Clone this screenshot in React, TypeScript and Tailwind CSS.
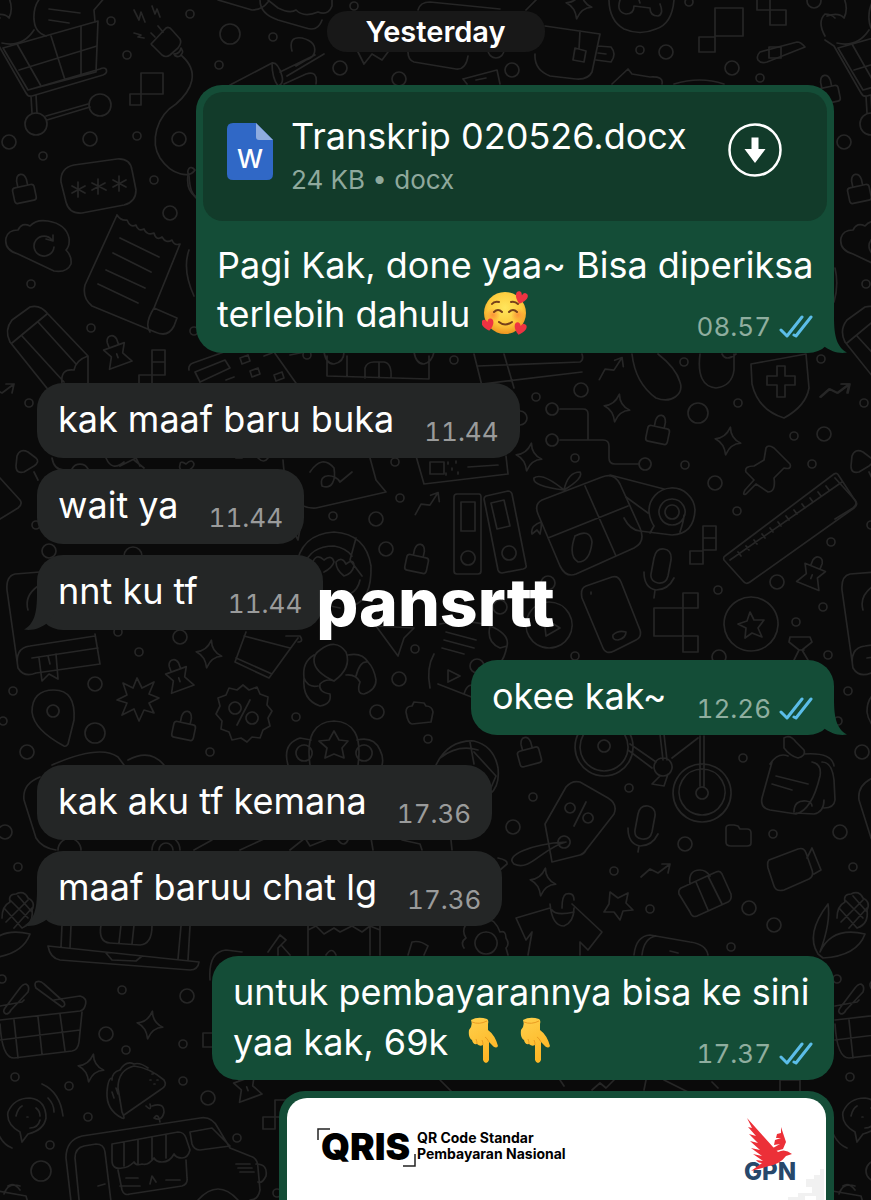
import type { ReactNode } from "react";

interface MessageType {
	lines: ReactNode[];
	time: string;
	sent?: boolean;
	tail?: boolean;
	width?: string;
	document?: boolean;
}

const dots = [
	[111, 21, 4], [190, 14, 4], [230, 34, 10], [273, 37, 4], [127, 55, 4], [219, 65, 4], [340, 68, 7],
	[399, 79, 7], [90, 139, 7], [9, 142, 7], [137, 136, 4], [179, 139, 7], [43, 156, 4], [154, 180, 4],
	[170, 213, 7], [31, 284, 4], [91, 328, 4], [194, 331, 4], [36, 124, 11], [100, 105, 11], [354, 6, 4],
	[512, 70, 7], [640, 50, 4], [666, 52, 7], [732, 68, 7], [760, 78, 4], [689, 2, 4], [814, 1, 7],
	[496, 50, 8], [454, 360, 4], [684, 362, 4], [821, 359, 4], [307, 355, 4], [29, 403, 4], [395, 462, 4],
	[400, 498, 4], [333, 516, 4], [376, 519, 7], [386, 549, 7], [49, 551, 7], [36, 525, 4], [133, 556, 9],
	[180, 637, 7], [139, 652, 4], [118, 632, 4], [95, 684, 7], [13, 691, 4], [3, 721, 4], [296, 717, 4],
	[27, 752, 7], [95, 733, 10], [377, 712, 7], [428, 739, 4], [399, 679, 7], [415, 649, 4], [210, 752, 4],
	[536, 397, 4], [581, 390, 7], [520, 418, 7], [698, 413, 10], [738, 403, 4], [575, 458, 4],
	[685, 465, 4], [715, 483, 7], [794, 436, 4], [824, 434, 7], [812, 464, 4], [737, 511, 4],
	[831, 542, 4], [777, 582, 7], [718, 590, 4], [823, 607, 4], [796, 622, 4], [828, 655, 4],
	[575, 656, 4], [719, 657, 7], [477, 666, 7], [743, 758, 4], [548, 583, 7], [500, 607, 7], [5, 832, 7],
	[18, 867, 4], [2, 979, 4], [122, 990, 4], [187, 996, 7], [106, 1034, 7], [126, 1050, 4],
	[183, 1044, 4], [183, 1081, 4], [15, 1077, 4], [69, 1086, 4], [208, 1098, 7], [88, 1117, 4],
	[50, 1145, 4], [41, 1171, 10], [237, 1138, 4], [533, 797, 4], [513, 827, 7], [629, 788, 4],
	[685, 844, 7], [773, 834, 4], [614, 871, 4], [650, 909, 4], [749, 908, 7], [774, 925, 7],
	[731, 947, 4], [277, 1193, 4],
];

const sparkles = [
	[209, 654], [617, 408], [728, 441], [529, 457], [150, 1025], [91, 1068], [543, 882], [579, 5],
];

const locks = [
	[24, 192, -12], [417, 562, 12], [184, 729, 12], [658, 433, 12], [529, 755, -15], [828, 93, -12],
];

const tacks = [
	[116, 352, -20], [178, 676, -20], [813, 573, 22], [246, 1085, -20],
];

const trends = [
	[836, 390, 0], [427, 503, -20], [656, 870, 0], [0, 390, 0], [611, 368, -20],
];

const drawings = [
	// shopping cart and the things lying in it
	"M3 48 98 21 96 72 28 90Z M19 70 97 46 M17 44 41 86 M51 36 65 80 M81 26V76 M-10 40 -1 46 26 93Q28 97 32 96L103 75Q108 73 106 69Q104 67 100 69L28 90 M31 96 32 113 M36 95 37 113 M47 120 90 107 M46 116 88 104",
	"M34 20Q33 5 42 -4 M34 18Q34 32 46 36 M49 9 80 13 M49 20 69 23 M95 22 94 10 106 -4 M34 30Q22 48 2 43 M-8 16Q4 12 9 18Q14 8 8 -4",
	"M-10 36Q-18 22 -10 14Q-4 14 0 18 M-75 52Q-79 56 -77 60Q-74 64 -68 62L-30 47Q-34 42 -38 42Z",
	// plug with a long cable
	"M152 43 166 28Q169 26 172 30L180 39Q182 43 178 48L170 55Q166 58 162 55L153 46Q150 44 152 43 M174 54Q180 54 181 48L182 50Q184 52 180 56Q176 58 174 54 M158 26 163 32 M151 33 155 37 M182 56C200 72 192 90 176 104C156 116 150 142 160 158C172 176 190 178 195 170C190 164 186 170 189 176C190 190 192 194 197 199",
	"M134 10 139 20 141 12 145 22 M152 6 155 14 157 9 160 17 M134 33 141 35 138 37 144 38",
	// pixel squares
	"M141 73h22v21h-22z M130 94h11v11h-11z M152 350h13v25h-13z M152 362h13 M139 375h13v13h-13z M715 8h28v28h-28z M699 37h16v15h-16z M770 10h16v15h-16z M757 -4h13v14h-13z M769 47h12v11h-12z M703 526h13v24h-13z M703 538h13 M690 551h13v13h-13z M654 608h29v28h-29z M683 593h15v15h-15z M683 636h15v16h-15z M203 1033h12v14h-12z M263 1117h12v12h-12z M275 1100h12v17h-12z M780 1080h20v12h-20z",
	// password field
	"M74 165 117 159Q130 158 132 170L136 190Q136 202 124 205L82 213Q69 214 66 202L61 182Q60 168 74 165Z M78 182v15 M72 186 85 193 M72 193 85 186 M98 179v15 M92 183 106 190 M92 190 105 183 M119 176v15 M113 180 126 187 M113 187 126 180",
	// cloud
	"M18 254Q4 250 6 238Q8 230 18 230Q22 222 30 226Q36 219 48 221Q66 224 69 238Q70 246 66 250Q72 256 71 264Q67 273 54 271Z M52 240A10 10 0 1 0 54 247 M46 239 53 241 53 235",
	// receipt
	"M117 215 85 285Q82 298 92 306L155 332Q168 338 174 326L177 318 154 308Q144 324 150 332 M154 308 180 244Q174 246 172 240Q166 244 162 237Q156 241 154 233Q147 236 144 229Q138 232 136 225Q130 228 127 220Q121 221 117 215 M120 238 159 257 M113 253 151 272 M106 270 145 288 M98 284 138 303",
	// pencil
	"M10 342Q4 330 12 320L30 307Q40 304 48 314L88 356V385 M10 342 50 392 M12 343 47 314 M22 336 64 382 M38 322 76 364 M62 384Q60 368 74 370Q76 360 88 356",
	// calculator
	"M189 370Q188 365 193 363L224 352H274L298 386 M195 372 225 360 230 368 200 382Z M240 358 248 355 250 361 242 364Z M264 356 272 353M250 371 258 368 260 374 252 377Z M274 375 282 372 284 378 276 381Z M226 380l8-3",
	// shelf
	"M327 356V376L429 379V356 M347 356V376 M365 378V368Q367 362 374 362H384Q392 363 391 378 M379 362V378 M324 352Q326 364 334 364Q344 362 344 352 M414 352Q416 364 424 364Q432 362 434 352",
	// megaphone, hanger, food and mug on top
	"M230 85 272 63 M272 63Q278 62 282 76Q284 84 278 86Q272 78 272 63 M280 72 315 55 M287 76 324 54 M292 51Q288 36 302 38Q318 42 314 54Q312 58 306 60L296 66 M284 84 306 74Q318 70 316 84",
	"M218 0 252 10Q262 10 268 2 M260 0Q260 14 278 20L306 28Q318 32 322 20 M268 0 278 8 Q290 14 296 10Q304 18 318 12Q328 16 332 6V0 M358 52 364 64 372 54 382 60 388 52 M408 52Q408 60 414 62L456 69Q466 70 468 56",
	"M418 10Q420 2 430 2L500 9 M526 10 538 -2 M545 26 600 34 592 72Q588 80 576 79L550 76Q534 70 535 54 M580 31 579 49 M575 48 586 51 584 62 573 60Z M598 46 611 47Q617 54 611 62L596 60 M598 53 606 54 M463 79 497 70 500 84 M463 79 467 84 M476 80 486 78 M612 84 628 69 632 74 650 77 Q664 76 662 84 M674 84Q700 76 724 84",
	"M609 -4Q608 20 624 29Q640 36 656 29Q672 24 674 0 M620 0Q616 12 626 14Q634 14 634 6L650 8Q650 16 658 16Q664 14 660 4 M639 0 640 3",
	"M189 250Q182 270 194 296 M188 175Q186 190 195 196 M835 268Q839 285 834 302 M290 355 305 352",
	// boxes and bottles between the bubbles
	"M474 354 482 386 M504 354 514 388 M482 384 582 372 M478 366 580 362Q584 360 582 354 M632 354C634 372 642 388 656 398C672 404 684 394 680 382Q676 368 658 354 M700 354Q696 386 716 388Q732 386 734 370V354 M722 354Q726 362 736 354 M751 364 806 354 809 388Q806 406 784 418Q758 410 752 384Z M777 366h8v10h10v9h-10v12h-8v-12h-10v-9h10z",
	// circuit
	"M560 409H583Q588 409 588 414V439 M560 440H603Q609 440 609 446V458Q609 464 615 464H638 M552 403a6 6 0 1 0 .1 0 M552 434a6 6 0 1 0 .1 0 M645 458a6 6 0 1 0 .1 0",
	// signature note and radio
	"M283 460Q286 510 316 508L386 492 376 480 370 458 M310 472Q322 454 334 468C336 480 332 490 322 486C318 472 336 474 340 482L352 472 M416 456 424 484 508 474 506 456 M430 462h14v12h-14z M468 467 498 465 M448 462v2 M456 461v2 M452 468v2 M446 473v2 M458 472v2",
	"M52 458Q54 470 64 470 M72 469A9 9 0 0 1 88 469 M106 458Q112 472 124 462 M120 466 136 458 140 466 M134 460 144 468 M180 465Q180 460 186 464Q192 458 194 464Q194 468 186 472Q178 470 180 465 M236 458h6 M258 458q6 6 10 0",
	// play buttons
	"M17 456Q20 448 28 452L36 458Q40 462 34 466L24 472Q16 474 16 466Z M0 478 20 500Q23 504 18 508L0 519 M34 472 38 480",
	// binders and gift
	"M457 494H479Q481 494 481 497V571Q481 574 478 574H457Q454 574 454 571V497Q454 494 457 494Z M461 502h14v29h-14z M468 551a7 7 0 1 0 .1 0 M486 496 508 491Q511 491 512 494L526 565Q527 568 523 569L502 573Q499 573 498 570L484 499Q484 497 486 496Z M491 503 504 500 510 526 497 529Z M509 546a7 7 0 1 0 .1 0",
	"M542 500 602 477Q614 472 620 484L640 528Q646 542 634 548L576 574Q566 578 560 566L538 514Q534 504 542 500Z M585 486 616 556 M548 538 628 506 M564 490Q532 486 534 478Q542 472 564 490Q568 472 580 472Q584 478 564 490 M575 536Q590 528 592 542Q590 562 578 562Q568 556 575 536 M541 522Q530 526 532 534L537 530 540 534Q542 526 541 522",
	// tape
	"M610 475 664 489 M626 497 648 513 M624 518Q630 530 640 531L672 535Q694 534 695 510A23 23 0 1 0 649 512Q650 520 654 526L650 533 M672 499a13 13 0 1 0 .1 0 M672 505a7 7 0 1 0 .1 0 M680 532Q684 520 684 515",
	// microphones
	"M654 558Q656 548 664 549Q672 550 671 560L668 576Q666 584 658 583Q650 581 651 574Z M644 572Q644 588 656 590Q668 590 674 578 M655 590 654 598 M638 814Q640 805 648 806Q656 808 655 816L652 832Q650 840 642 839Q634 838 635 830Z M628 828Q628 844 640 846Q652 846 658 834 M639 846 638 852",
	// pushpin
	"M766 448Q768 444 774 448L790 464Q792 470 784 468L774 478Q776 492 768 492L756 484 746 494Q742 496 745 490L754 480 746 472Q744 466 754 466L764 460Z",
	// ruler
	"M725 556 834 474Q837 472 839 476L856 502Q858 505 854 508L750 582Q746 585 743 581L724 560Q723 557 725 556Z M730 560 842 482 M738 552 741 556 M746 546 749 550 M754 540 757 544 M762 534 765 538 M770 528 773 532 M778 522 781 526 M786 516 789 520 M794 510 797 514 M802 504 805 508 M810 498 813 502 M818 492 821 496 M826 486 829 490",
	// phone, stars and blocks
	"M586 586 612 577Q618 575 621 582L640 630Q642 637 636 640L614 651Q606 655 603 648L582 598Q580 588 586 586Z M591 592v2 M613 635Q618 630 626 632Q626 638 618 640Q612 640 613 635 M751 597a27 27 0 1 0 .1 0 M750 612 754 620 764 620 758 628 762 637 752 633 745 638 746 628 738 624 747 621Z M549 602a23 23 0 1 0 .1 0 M544 618 560 628 546 636Z",
	"M790 637H810L812 642 802 650 808 660 M790 637 789 642 799 650 794 660 M799 650h5",
	"M440 624Q464 618 490 626 M446 632 476 640 M444 640 474 648 M442 648 464 654 M438 684 474 698 M490 626Q486 642 500 648L507 646Q504 660 500 662 M490 626Q510 634 507 646 M448 670 460 676 448 682Z M464 694Q468 680 478 688",
	// smiling lollipop
	"M296 568Q300 534 334 532Q366 534 371 566Q372 600 352 606 M304 566Q310 546 334 546Q346 548 352 556 M312 564Q316 552 324 560Q332 554 334 562Q332 568 324 572 M336 562Q342 556 346 564Q354 558 354 566Q352 574 344 576Q336 570 336 562 M356 538 350 560 362 576 M360 580Q358 590 350 594 M294 532 302 518 298 540Z",
	// book
	"M40 572 15 574Q6 576 7 590L18 668Q24 678 36 673L100 664 95 634 M18 668Q14 648 30 646L95 636 M32 658 98 648 M39 658 42 681 49 674 58 679 56 654 M48 656 50 664 M38 586Q24 596 28 610",
	// map pin
	"M64 746Q66 747 68 744L74 720Q76 690 54 690Q32 690 32 712Q34 730 64 746Z M53 705a6 6 0 1 0 .1 0",
	// burst
	"M137 678 142 688 154 682 149 694 159 698 149 703 154 713 144 710 139 721 134 709 122 715 127 703 117 700 127 695 123 683 133 688Z",
	// percent badge
	"M243 685 249 690 257 687 260 694 268 697 267 705 272 711 268 718 270 726 263 730 260 738 252 737 247 742 241 738 232 740 229 732 221 729 222 721 216 714 220 706 218 698 226 695 229 688 237 690Z M235 702a6 6 0 1 0 .1 0 M252 712a6 6 0 1 0 .1 0 M250 700 237 725",
	// coffee cup
	"M246 632 235 662 269 678 298 638 M236 658 272 674 M244 636 290 648 M286 636 300 636Q304 642 298 642 M302 600 340 608",
	// croissant
	"M320 650Q336 638 346 652Q352 668 334 681Q314 672 314 660Q314 654 320 650Z M314 655Q302 662 304 678 M304 678Q302 700 320 706Q332 704 330 694Q318 692 320 684Q326 678 334 681 M304 678Q308 688 318 686 M348 655Q362 652 368 662Q360 660 356 676 M346 675Q356 674 360 682Q356 694 364 694Q376 690 376 680Q374 668 368 662",
	// paper plane and small folder
	"M376 626 398 656 404 638 414 628Z M430 688Q426 668 434 654",
	"M406 712Q406 706 412 706L414 702 424 703 426 706Q432 706 433 712L431 722 412 724Q408 724 406 712",
	// star flower
	"M310 765Q304 722 334 721Q364 722 358 765 M288 765Q282 744 300 738L311 740 M357 740Q374 736 380 750Q384 758 382 765 M304 745a8 8 0 1 0 .1 0 M364 745a8 8 0 1 0 .1 0 M334 731 339 740 348 741 342 748 344 758 334 754 325 758 327 748 319 741 329 740Z",
	// suitcase behind the received bubbles
	"M52 765Q100 744 118 757L124 765 M128 760Q150 748 164 765 M40 777Q22 784 24 800L36 838Q42 848 56 850 M58 850A11 11 0 0 1 81 850 M152 850A13 13 0 0 1 180 850 M159 850A7 7 0 0 1 173 850 M194 850 212 840 M240 850 266 838 M290 850 305 838 310 846 330 838 M338 840q6 8 10 0 M371 838 373 850 M402 840 420 844 422 850",
	// beach ball
	"M436 765Q448 740 474 741Q494 746 498 768Q500 786 490 794 M440 758Q458 744 478 750 M470 742 474 764 M474 752 496 776 490 790 M451 840 452 850",
	// bicycle
	"M604 718a29 29 0 1 0 .1 0 M604 723a24 24 0 1 0 .1 0 M604 740a6 6 0 1 0 .1 0 M702 764a29 29 0 1 0 .1 0 M702 769a23 23 0 1 0 .1 0 M702 787a6 6 0 1 0 .1 0 M630 744 656 762 M628 750 652 768 M660 734 663 760 M664 734 667 760 M672 758 698 738 M700 736V786 M704 736V786 M663 758a9 9 0 1 0 .1 0 M660 776 652 784 664 786 668 774",
	// price tag
	"M545 824 566 787Q572 780 580 782L608 798Q618 804 614 814L586 850Q584 854 580 855L552 862Z M570 803a5 5 0 1 0 .1 0 M588 813a5 5 0 1 0 .1 0 M586 802 574 826 M564 836a6 6 0 1 0 .1 0 M566 842C530 844 504 856 514 864C530 872 542 848 566 842 M498 858Q508 860 507 864L500 870",
	// sticky notes
	"M772 762 762 798Q760 808 770 810L796 814Q812 810 820 776Q822 764 812 762 M776 776 808 784 M772 784 792 790 M794 812Q794 800 806 801Q812 802 812 806 M796 813 814 814Q824 812 824 800 M822 762Q832 762 834 780L835 800Q834 808 824 808 M784 738Q790 734 796 742L804 750Q806 756 798 758Q790 756 784 748Z M770 764Q778 752 788 756 M804 754Q832 752 834 766",
	// folder, camera and bag
	"M726 828Q726 825 730 825H734L738 826 740 829H747Q751 829 751 833V843Q751 846 747 846H731Q726 846 726 842Z M769 860 798 849Q804 847 806 853L812 870Q814 876 809 879L784 890Q776 892 774 886L768 868Q767 862 769 860Z M807 858 812 848 821 870 814 874",
	"M681 888 716 872Q720 870 722 874L731 894Q732 900 728 902L697 916Q692 918 690 912L679 894Q678 890 681 888Z M690 884Q688 870 700 870Q706 870 710 876 M696 882 708 910 M708 876 722 904",
	"M610 892 618 898 628 893 626 903 633 910 623 911 620 920 614 912 604 912 609 904Z",
	// t-shirt and gear
	"M550 908 516 918 526 940 532 932 528 955 M572 904 602 932 588 950 580 942V955 M550 904Q552 926 564 926Q574 922 574 908 M552 910Q556 916 574 912 M562 908Q562 896 566 894Q574 892 574 900",
	"M465 926 470 922Q490 918 494 922Q498 926 500 932Q506 930 506 938Q510 944 506 948L508 955 M465 926Q462 932 466 938Q460 942 464 948 M486 932a11 11 0 1 0 .1 0 M634 955Q636 936 650 935L690 942Q706 944 708 955 M642 955Q644 938 656 936 M670 951 678 953",
	// corn
	"M-17 954Q-30 934 -7 904Q-4 922 -15 952Q-3 926 30 934Q22 956 -12 958Z M2 918Q2 906 10 902Q8 894 16 894Q24 890 28 898Q36 902 32 910Q34 924 22 928 M4 908 22 928 M10 900 28 918 M18 896 32 912 M6 922 28 900 M14 928 32 908",
	// laptop
	"M62 925 61 947 M71 925 70 948 M48 946 199 962Q198 970 190 970L60 960Q50 958 48 946Z M106 953 112 960 136 961 142 956 M181 926 178 959 M190 926 188 960 M101 925Q98 942 110 943L140 945Q152 944 152 926 M121 925 119 943 M134 925 132 944",
	// torn papers
	"M308 925V955 M308 930 316 926 324 934 334 928 340 932 352 926 362 932 370 926 380 930 M370 926V955 M380 926V955 M210 980Q208 952 226 950L242 952 M268 952 280 935 286 940 278 948 278 955 M282 946 290 955 M326 955Q332 946 336 955 M408 955 412 942Q420 940 428 946L424 955",
	// shopping basket
	"M0 1006 22 1002 24 1000 M54 1000 80 996Q88 998 85 1006Q84 1010 80 1011L0 1020 M0 1024Q2 1058 14 1058L72 1051Q78 1050 79 1042L82 1012 M14 1020 18 1058 M38 1017 42 1054 M60 1014 65 1051 M0 1040 80 1030 M5 1008Q2 1012 6 1014Q9 1014 11 1010L28 992Q30 986 26 984Q23 984 20 988Z M36 982Q40 980 44 984L64 1002Q66 1006 62 1007L36 988Q34 984 36 982Z",
	// taco
	"M118 1088Q118 1070 134 1066Q150 1068 164 1080Q168 1086 160 1090L124 1115 M122 1118Q106 1110 107 1092Q108 1078 112 1078 M112 1080Q112 1072 120 1070Q126 1060 134 1064Q140 1062 148 1068 M118 1088 122 1112Q126 1120 122 1118 M112 1092l2 6 M116 1088l2 6 M150 1080h1 M154 1084h1 M157 1080h1 M152 1074h1 M146 1106Q152 1112 150 1104 M152 1106Q164 1102 164 1112Q162 1122 154 1118Q158 1112 160 1122",
	// speaking bubble
	"M20 1132Q6 1124 8 1112Q14 1098 30 1098Q46 1100 46 1118Q44 1130 28 1134L22 1142Z M16 1116Q18 1108 22 1106 M40 1120Q38 1128 30 1128 M27 1117h1 M36 1108q4 3 4 8 M42 1084Q60 1092 63 1116 M48 1098Q54 1104 54 1112 M-8 1110Q-4 1142 12 1148",
	// food truck
	"M72 1210 66 1158Q66 1140 82 1136L200 1118Q212 1116 218 1128L230 1148 250 1156Q258 1158 258 1168L260 1190Q258 1200 250 1200 M80 1210 75 1158Q75 1148 84 1146L96 1144Q104 1144 105 1152L112 1210 M98 1186 105 1184 M112 1144 178 1132Q184 1132 186 1138L190 1150Q188 1158 182 1158Q176 1158 174 1154Q170 1162 162 1162Q156 1162 154 1158Q148 1166 142 1164Q136 1166 134 1162Q128 1168 122 1168Q112 1170 112 1160Z M124 1143V1166 M138 1140V1164 M152 1138V1160 M166 1135V1158 M118 1170 122 1190Q124 1196 130 1194L182 1186Q188 1184 187 1178L186 1160 M190 1132 212 1128 230 1146 200 1150Q194 1150 192 1144Z M236 1164h14 M238 1168h14 M240 1172h14 M198 1200Q218 1178 238 1200 M256 1164Q268 1164 266 1176Q262 1184 258 1182 M120 1186h20 M126 1178h12 M166 1180h14 M150 1184 152 1176 156 1182",
	// handbag
	"M4 1194Q8 1182 20 1186 M-20 1188 26 1196 30 1210 M8 1186Q14 1182 20 1190",
	"M440 1080 452 1092 M592 1090 600 1083 606 1088 614 1080 M646 1080 644 1090 M664 1080 688 1092 M712 1082 718 1088 M560 1080 564 1086",
];

const Doodles = () => {
	return (
		<svg
			className="absolute top-0 left-0"
			width="1670"
			height="1200"
			fill="none"
			stroke="#262626"
			strokeWidth="1.7"
			strokeLinejoin="round"
			strokeLinecap="round"
			aria-hidden="true"
		>
			<defs>
				<path id="sparkle" d="M0-14Q2-3 13 0Q3 2 0 14Q-3 3-13 0Q-3-2 0-14Z" />
				<path id="lock" d="M-8-6H8Q11-6 11-3V7Q11 10 8 10H-8Q-11 10-11 7V-3Q-11-6-8-6Z M-5-6V-12Q-4-18 0-18Q4-18 5-12V-6" />
				<path id="tack" d="M-11-6H11L6 3 12 14H-12L-6 3Z M-5-6V-12Q-4-17 0-17Q4-17 5-12V-6 M0 2V6" />
				<path id="trend" d="M-15 7-6-1 2 3 14-6 M6-6H14L12 3" />
			</defs>
			<g id="wallpaper">
				{drawings.map((d, index) => (
					<path d={d} key={index} />
				))}
				{dots.map(([x, y, r], index) => (
					<circle cx={x} cy={y} r={r} key={index} />
				))}
				{sparkles.map(([x, y], index) => (
					<use href="#sparkle" transform={`translate(${x} ${y}) rotate(10)`} key={index} />
				))}
				{locks.map(([x, y, angle], index) => (
					<use href="#lock" transform={`translate(${x} ${y}) rotate(${angle})`} key={index} />
				))}
				{tacks.map(([x, y, angle], index) => (
					<use href="#tack" transform={`translate(${x} ${y}) rotate(${angle})`} key={index} />
				))}
				{trends.map(([x, y, angle], index) => (
					<use href="#trend" transform={`translate(${x} ${y}) rotate(${angle})`} key={index} />
				))}
			</g>
			<use href="#wallpaper" x="835" />
		</svg>
	);
};

const Checks = () => {
	return (
		<svg
			className="w-[34px] h-[24px]"
			viewBox="0 0 34 24"
			fill="none"
			stroke="#5bbde8"
			strokeWidth="3"
			strokeLinecap="round"
			strokeLinejoin="round"
			role="img"
			aria-label="Read"
		>
			<path d="M2 15 8 21 23 2 M15 20 17 21 32 2" />
		</svg>
	);
};

const LoveFace = () => {
	return (
		<svg className="inline-block w-[46px] h-[44px] ml-[2px] align-[-8px]" viewBox="0 0 46 44" role="img" aria-label="smiling face with hearts">
			<defs>
				<radialGradient id="face" cx="50%" cy="38%" r="62%">
					<stop offset="0" stopColor="#ffe65c" />
					<stop offset="0.65" stopColor="#fdca3c" />
					<stop offset="1" stopColor="#ee9420" />
				</radialGradient>
				<radialGradient id="blush">
					<stop offset="0" stopColor="#fb7b35" stopOpacity="0.7" />
					<stop offset="1" stopColor="#fb7b35" stopOpacity="0" />
				</radialGradient>
				<path id="heart" d="M0 6C-8 0-7-6-3-6Q-1-6 0-3Q1-6 3-6C7-6 8 0 0 6Z" fill="#ee3342" />
			</defs>
			<circle cx="23" cy="22" r="21" fill="url(#face)" />
			<circle cx="11" cy="24" r="7" fill="url(#blush)" />
			<circle cx="36" cy="24" r="7" fill="url(#blush)" />
			<g fill="none" stroke="#75401a" strokeWidth="2" strokeLinecap="round">
				<path d="M12 21Q16 17 20 21 M27 21Q31 17 35 21 M10 13Q12 10 17 11 M29 11Q33 10 36 13" />
				<path d="M17 31Q23 36 30 31" />
			</g>
			<use href="#heart" transform="translate(39 7) rotate(18)" />
			<use href="#heart" transform="translate(6 34) rotate(-12)" />
			<use href="#heart" transform="translate(38 38) rotate(14)" />
		</svg>
	);
};

const PointDown = () => {
	return (
		<svg className="inline-block w-[30px] h-[46px] mr-[22px] align-[-8px]" viewBox="0 0 30 46" role="img" aria-label="pointing down">
			<defs>
				<linearGradient id="skin" x1="0" y1="0" x2="0.4" y2="1">
					<stop offset="0" stopColor="#ffd04c" />
					<stop offset="1" stopColor="#fdb625" />
				</linearGradient>
			</defs>
			<path d="M3 3Q10-1 19 2Q21 3 20 7L20 13Q27 18 30 29Q28 33 23 27L21 25V43Q20 46 18 46Q16 46 15 43V28Q12 30 9 27Q5 28 4 23Q0 21 1 13Q5 9 3 3Z" fill="url(#skin)" />
			<path d="M4 5Q11 8 19 4 M9 27Q9 24 8 22 M15 28Q15 25 14 23 M21 25Q19 21 17 20" fill="none" stroke="#eb9c22" strokeWidth="1" />
		</svg>
	);
};

const Tail = ({ sent }: { sent?: boolean }) => {
	if (sent) {
		return (
			<svg className="absolute bottom-0 -right-[13px] w-[30px] h-[36px]" viewBox="0 0 30 36" fill="#144d37" aria-hidden="true">
				<path d="M17 0C17 20 20 30 30 35.500C21 37 14 34 8 30L0 20V0Z" />
			</svg>
		);
	}
	return (
		<svg className="absolute bottom-0 -left-[13px] w-[30px] h-[36px]" viewBox="0 0 30 36" fill="#242626" aria-hidden="true">
			<path d="M13 0C13 20 10 30 0 35.500C9 37 16 34 22 30L30 20V0Z" />
		</svg>
	);
};

const DocumentCard = () => {
	return (
		<div className="flex items-start mx-[7px] mt-[7px] mb-2 h-[129px] pl-6 pr-[45px] pt-[31px] rounded-[20px] bg-[#123b2a]">
			<div className="relative w-[46px] h-[57px] shrink-0">
				<svg viewBox="0 0 46 57" className="w-full h-full" aria-hidden="true">
					<path d="M6 0H29L46 17V51Q46 57 40 57H6Q0 57 0 51V6Q0 0 6 0Z" fill="#3068c6" />
					<path d="M29 0 46 17H32Q29 17 29 14Z" fill="#8facdf" />
				</svg>
				<span className="absolute inset-x-0 bottom-1 text-center text-[26px] leading-[34px] font-medium">W</span>
			</div>
			<div className="ml-[18px] -mt-[9px] flex-1">
				<h2 className="text-[36px] leading-[44px]">Transkrip 020526.docx</h2>
				<p className="mt-1 text-[26px] leading-[36px] text-[#8fa99d]">24 KB • docx</p>
			</div>
			<button type="button" aria-label="Download" className="w-[54px] h-[54px] shrink-0">
				<svg viewBox="0 0 54 54" fill="none" stroke="#fff" strokeWidth="2.500">
					<circle cx="27" cy="27" r="25.500" />
					<path d="M23.500 14.500H30.500V26H37.500L27 40 16.500 26H23.500Z" fill="#fff" stroke="none" />
				</svg>
			</button>
		</div>
	);
};

const Message = ({ lines, time, sent, tail, width, document }: MessageType) => {
	const last = lines[lines.length - 1];
	return (
		<article
			className={`relative max-w-full rounded-[26px] ${width ?? ""} ${
				sent ? "self-end bg-[#144d37]" : "self-start bg-[#242626]"
			}`}
		>
			{tail && <Tail sent={sent} />}
			{document && <DocumentCard />}
			<div className="relative px-[21px] pt-[12px] pb-[14px] text-[36px] leading-[49px] whitespace-nowrap">
				{lines.slice(0, -1).map((line, index) => (
					<p key={index}>{line}</p>
				))}
				<div className="flex items-end justify-between gap-[30px]">
					<p className="h-[49px]">{last}</p>
					<div className={`flex items-center gap-2 h-[24px] ${sent ? "text-[#8fae9f]" : "text-[#9a9b9b]"}`}>
						<time className="text-[26px] leading-[24px] tabular-nums">{time}</time>
						{sent && <Checks />}
					</div>
				</div>
			</div>
		</article>
	);
};

const Payment = () => {
	return (
		<article className="self-end w-[555px] max-w-full rounded-t-[26px] bg-[#144d37] px-2 pt-[7px]">
			<div className="relative flex items-start justify-between h-[103px] overflow-hidden rounded-t-[20px] bg-white pl-[30px] pr-[29px] text-black">
				<div className="flex mt-[30px]">
					<div className="relative w-[100px] h-[40px]">
						<svg viewBox="0 0 100 40" className="absolute inset-0" fill="none" stroke="#222" strokeWidth="1.500" aria-hidden="true">
							<path d="M1 12V1H13 M86 38H98V26" />
						</svg>
						<span className="relative block pl-1 text-[37px] leading-[38px] font-black">QRIS</span>
					</div>
					<p className="text-[14px] leading-[16px] font-bold mt-[2px]">
						QR Code Standar
						<br />
						Pembayaran Nasional
					</p>
				</div>
				<div className="relative mt-[19px] w-[54px] h-[68px]">
					<span className="absolute inset-x-0 bottom-0 text-center text-[24px] leading-[26px] font-extrabold text-[#27486b]">GPN</span>
					<svg viewBox="0 0 54 68" className="absolute inset-0" aria-hidden="true">
						<path d="M4 1 30 30 35 35Q42 31 49 37L43 39Q37 47 26 49L8 54 19 46Q15 46 13 43L20 44 10 37 19 39 8 31 17 33 7 24 15 26 6 17 13 19 5 10 9 11Z" fill="#ec3038" />
						<path d="M38 10 43 25 40 32 33 34 30 31 37 27 31 28 32 23 38 21 33 21 34 17 38 16Z" fill="#ec3038" />
					</svg>
				</div>
				<svg className="absolute bottom-0 right-0 w-[38px] h-[34px]" viewBox="0 0 38 34" fill="#f1f1f1" aria-hidden="true">
					<path d="M0 34V30H10V26H24V20H18V12H26V8H32V2H36V34H28V29H17V34Z" />
				</svg>
			</div>
		</article>
	);
};

const groups: MessageType[][] = [
	[
		{
			lines: [
				"Pagi Kak, done yaa~ Bisa diperiksa",
				<>
					terlebih dahulu <LoveFace />
				</>,
			],
			time: "08.57",
			sent: true,
			tail: true,
			document: true,
			width: "w-[638px]",
		},
	],
	[
		{ lines: ["kak maaf baru buka"], time: "11.44" },
		{ lines: ["wait ya"], time: "11.44" },
		{ lines: ["nnt ku tf"], time: "11.44", tail: true },
	],
	[{ lines: ["okee kak~"], time: "12.26", sent: true, tail: true }],
	[
		{ lines: ["kak aku tf kemana"], time: "17.36" },
		{ lines: ["maaf baruu chat lg"], time: "17.36", tail: true },
	],
	[
		{
			lines: [
				"untuk pembayarannya bisa ke sini",
				<>
					yaa kak, 69k <span className="pl-[10px]"><PointDown /><PointDown /></span>
				</>,
			],
			time: "17.37",
			sent: true,
			width: "w-[622px]",
		},
	],
];

const App = () => {
	return (
		<main className="relative min-h-screen overflow-hidden bg-[#0a0a0a] font-['Inter','Liberation_Sans',sans-serif] text-white">
			<Doodles />
			<div className="relative flex flex-col px-[37px] pt-[11px]">
				<h1 className="self-center w-[218px] h-[41px] mb-[33px] rounded-[20px] bg-[#181818] text-center text-[29px] leading-[42px] font-semibold">
					Yesterday
				</h1>
				<div className="relative flex flex-col gap-[30px]">
					{groups.map((messages, index) => (
						<section className="flex flex-col gap-[11px]" key={index}>
							{messages.map((message, i) => (
								<Message {...message} key={i} />
							))}
							{index === groups.length - 1 && <Payment />}
						</section>
					))}
				</div>
				<p className="absolute inset-x-0 top-[562px] text-center text-[66px] leading-[80px] font-extrabold">pansrtt</p>
			</div>
		</main>
	);
};

export default App;
